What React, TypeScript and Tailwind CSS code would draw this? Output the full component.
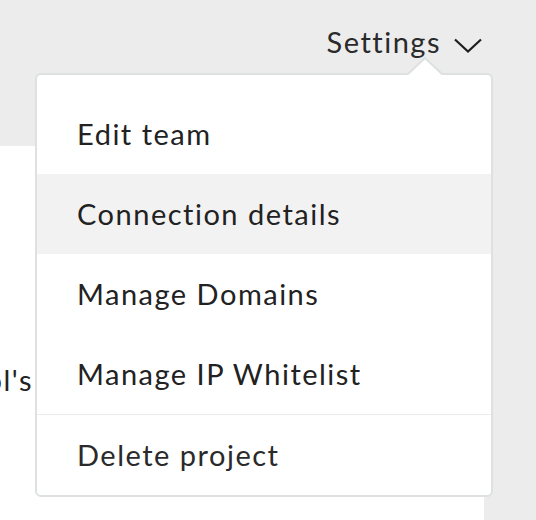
import React from 'react';

const items = ['Edit team', 'Connection details', 'Manage Domains', 'Manage IP Whitelist'];

const font = { fontFamily: 'Lato, "Open Sans", sans-serif' };

const App = () => {
  return (
    <div
      className="relative flex h-[520px] w-[536px] flex-col overflow-hidden bg-[#ececec] text-[#222] tracking-[1.5px]"
      style={font}
    >
      {/* Top bar */}
      <div className="flex h-[146px] justify-end pr-[54px] pt-[22px]">
        <button className="flex h-[40px] items-center gap-[13px] text-[29px] text-[#2a2a2a]">
          <span>Settings</span>
          <svg width="28" height="15" viewBox="0 0 28 15" fill="none" className="mt-[6px]">
            <polyline points="1,1.5 14,13.5 27,1.5" stroke="#1e1e1e" strokeWidth="2.2" />
          </svg>
        </button>
      </div>

      {/* Page content behind menu */}
      <div className="flex w-[484px] flex-1 bg-white">
        <div className="mt-[212px] flex h-[40px] w-[33px] justify-end overflow-hidden text-[29px] whitespace-nowrap">
          <span>Pool's</span>
        </div>
      </div>

      {/* Dropdown */}
      <div className="absolute left-[35px] top-[73px] w-[458px] rounded-[6px] border-2 border-[#dde1e0] bg-white pt-[19px]">
        <svg
          width="36"
          height="19"
          viewBox="0 0 36 19"
          className="absolute left-[370px] top-[-18px]"
        >
          <polygon points="1,18 18,1 35,18" fill="white" />
          <polyline points="1,17 18,1 35,17" fill="none" stroke="#dde1e0" strokeWidth="2" />
        </svg>
        {items.map((item, i) => (
          <div
            key={item}
            className={`flex h-[80px] items-center px-[40px] text-[29px] ${i === 1 ? 'bg-[#f2f2f2]' : ''}`}
          >
            {item}
          </div>
        ))}
        <div className="h-px bg-[#ececec]" />
        <div className="flex h-[80px] items-center px-[40px] text-[29px] text-[#2a2a2a]">Delete project</div>
      </div>
    </div>
  );
};

export default App;
